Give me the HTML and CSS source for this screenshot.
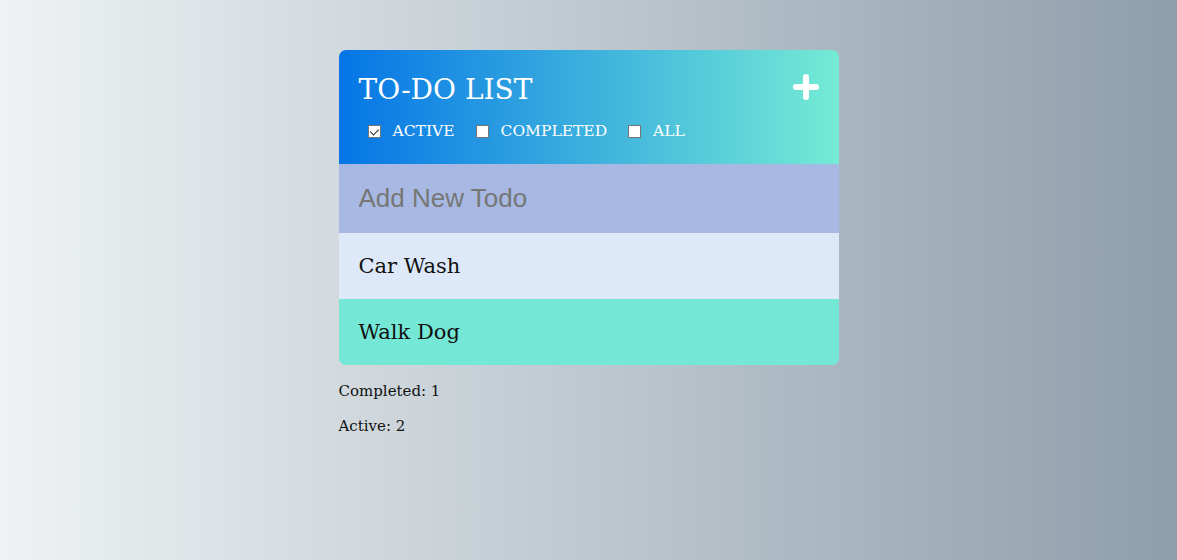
FILE: index.html
```html
<!DOCTYPE html>
<html>
<head>
<meta charset="utf-8">
<link rel="stylesheet" href="styles.css">
</head>
<body>
<div class="app">
  <div class="card">
    <div class="header">
      <div class="title-row">
        <h1 class="title">TO-DO LIST</h1>
        <svg class="plus" width="26" height="26" viewBox="0 0 26 26"><path d="M13 3 V23 M3 13 H23" stroke="#fff" stroke-width="6" stroke-linecap="round"/></svg>
      </div>
      <div class="filters">
        <label class="filter"><input type="checkbox" checked>ACTIVE</label>
        <label class="filter"><input type="checkbox">COMPLETED</label>
        <label class="filter"><input type="checkbox">ALL</label>
      </div>
    </div>
    <input class="new-todo" type="text" placeholder="Add New Todo">
    <div class="todo todo-active">Car Wash</div>
    <div class="todo todo-done">Walk Dog</div>
  </div>
  <p class="stat">Completed: 1</p>
  <p class="stat">Active: 2</p>
</div>
</body>
</html>
```
FILE: styles.css
```css
html, body {
  margin: 0;
  height: 100%;
}
body {
  background: linear-gradient(to right, #eef2f3, #8e9eab);
  font-family: "DejaVu Serif", serif;
  color: #111;
}
.app {
  width: 500px;
  margin: 0 auto;
  padding-top: 50px;
}
.card {
  border-radius: 7px;
  overflow: hidden;
}
.header {
  background: linear-gradient(to right, #0575e6, #74ebd5);
  padding: 20px 20px 24px 20px;
  height: 114px;
  box-sizing: border-box;
  color: #fff;
}
.title-row {
  display: flex;
  justify-content: space-between;
  align-items: center;
  height: 38px;
}
.title {
  margin: 0;
  font-weight: normal;
  font-size: 28px;
}
.plus {
  margin-top: -4px;
}
.filters {
  display: flex;
  gap: 21px;
  margin-top: 14px;
  padding-left: 9px;
  font-size: 15.5px;
}
.filter {
  display: flex;
  align-items: center;
}
.filter input {
  -webkit-appearance: none;
  appearance: none;
  margin: 0 12px 0 0;
  width: 13px;
  height: 13px;
  box-sizing: border-box;
  border: 1px solid #767676;
  background: #fff;
  position: relative;
}
.filter input:checked::after {
  content: "";
  position: absolute;
  left: 3px;
  top: 1px;
  width: 4px;
  height: 7px;
  border: solid #222;
  border-width: 0 1.5px 1.5px 0;
  transform: rotate(45deg);
}
.new-todo {
  display: block;
  width: 100%;
  box-sizing: border-box;
  height: 69px;
  border: 0;
  outline: none;
  background: #a7b9e3;
  padding: 0 20px;
  font-family: "Liberation Sans", Arial, sans-serif;
  font-size: 26px;
  color: #333;
}
.new-todo::placeholder {
  color: #767676;
}
.todo {
  height: 66px;
  display: flex;
  align-items: center;
  padding: 0 20px;
  font-size: 21px;
  color: #111;
}
.todo-active {
  background: #dde8f9;
}
.todo-done {
  background: #74e7d6;
}
.stat {
  margin: 17px 0 0;
  font-size: 15px;
  line-height: 19px;
}
.stat + .stat {
  margin-top: 16px;
}
```
